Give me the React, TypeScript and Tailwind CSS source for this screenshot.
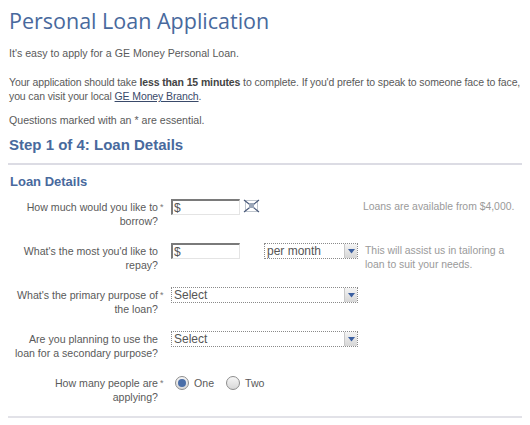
import React from "react";

const Arrow = () => (
  <span className="flex h-[14px] w-[13px] items-center justify-center border-l border-[#c8c8c8] bg-gradient-to-b from-[#f4f4f4] to-[#d6d6d6]">
    <svg width="7" height="5" viewBox="0 0 7 5">
      <path d="M0 0 L7 0 L3.5 4.5 Z" fill="#3b5fa0" />
    </svg>
  </span>
);

const Select = ({ value, w }: { value: string; w: string }) => (
  <div className={`flex h-[16px] items-center justify-between border border-dotted border-[#8a8a8a] bg-white ${w}`}>
    <span className="pl-[2px] text-[12px] leading-[14px] text-[#555]">{value}</span>
    <Arrow />
  </div>
);

const TextInput = () => (
  <div className="flex h-[16px] w-[69px] items-center border-t-2 border-l-2 border-r border-b border-t-[#7a7a7a] border-l-[#7a7a7a] border-r-[#e4e4e4] border-b-[#e4e4e4] bg-white">
    <span className="pl-[1px] text-[12px] leading-[14px] text-[#555]">$</span>
  </div>
);

const BrokenImg = () => (
  <svg width="18" height="14" viewBox="0 0 18 14" className="ml-[3px]">
    <rect x="2.5" y="1.5" width="12" height="11" fill="none" stroke="#7d8b9b" strokeWidth="1" strokeDasharray="1 1" />
    <path d="M1 1 L16 13 M16 1 L1 13" stroke="#49597a" strokeWidth="1.2" />
    <rect x="6" y="4" width="5" height="5" fill="#9aa6b8" />
  </svg>
);

const Radio = ({ on }: { on?: boolean }) => (
  <span className="flex h-[14px] w-[14px] items-center justify-center rounded-full border border-[#8d8d8d] bg-gradient-to-b from-[#f6f6f6] to-[#d8d8d8]">
    {on && <span className="h-[8px] w-[8px] rounded-full bg-[#4a6ea8]" />}
  </span>
);

const Row = ({
  l1,
  l2,
  star,
  children,
}: {
  l1: string;
  l2: string;
  star?: boolean;
  children: React.ReactNode;
}) => (
  <div className="flex items-start">
    <div className="w-[150px] text-right text-[10.6px] leading-[14px] text-[#5a5a5a]">
      <div className="whitespace-nowrap">{l1}</div>
      <div className="whitespace-nowrap">{l2}</div>
    </div>
    <div className="w-[13px] pl-[2px] text-[9px] leading-[14px] text-[#777]">{star ? "*" : ""}</div>
    <div className="flex flex-1 items-start">{children}</div>
  </div>
);

export default function App() {
  return (
    <div
      className="h-[425px] w-[530px] overflow-hidden bg-white px-[9px]"
      style={{ fontFamily: '"Liberation Sans", Arial, sans-serif' }}
    >
      <h1
        className="pt-[7px] text-[21.5px] leading-[28px] text-[#48699d]"
        style={{ fontFamily: '"Open Sans", sans-serif' }}
      >
        Personal Loan Application
      </h1>
      <div className="mt-[11px] text-[10.6px] leading-[14px] text-[#5a5a5a]">
        <p>It's easy to apply for a GE Money Personal Loan.</p>
        <p className="mt-[15px] whitespace-nowrap text-[10.5px] tracking-[-0.12px]">
          Your application should take <b className="text-[#444]">less than 15 minutes</b> to complete. If you'd prefer to speak to someone face to face,
          <br />
          you can visit your local <span className="text-[#3a4a6a] underline">GE Money Branch</span>.
        </p>
        <p className="mt-[10px]">Questions marked with an * are essential.</p>
      </div>
      <h2 className="mt-[9px] text-[15px] font-bold leading-[18px] text-[#48699d]">Step 1 of 4: Loan Details</h2>
      <div className="-mx-[1px] mt-[9px] h-[2px] bg-[#dcdce4]" />
      <h3 className="mt-[9px] pl-[1px] text-[13px] font-bold leading-[16px] text-[#48699d]">Loan Details</h3>
      <div className="-ml-[1px] mt-[10px] flex flex-col gap-[16px]">
        <Row l1="How much would you like to" l2="borrow?" star>
          <div className="-mt-[1px] flex items-start">
            <TextInput />
            <BrokenImg />
          </div>
          <div className="ml-[102px] whitespace-nowrap text-[10.4px] leading-[14px] text-[#9a9a9a]">
            Loans are available from $4,000.
          </div>
        </Row>
        <Row l1="What's the most you'd like to" l2="repay?">
          <div className="-mt-[1px] flex items-start">
            <TextInput />
            <div className="ml-[24px]">
              <Select value="per month" w="w-[94px]" />
            </div>
          </div>
          <div className="ml-[7px] text-[10.4px] leading-[14px] text-[#9a9a9a]">
            <div className="whitespace-nowrap">This will assist us in tailoring a</div>
            <div className="whitespace-nowrap">loan to suit your needs.</div>
          </div>
        </Row>
        <Row l1="What's the primary purpose of" l2="the loan?" star>
          <div className="-mt-[1px]">
            <Select value="Select" w="w-[187px]" />
          </div>
        </Row>
        <Row l1="Are you planning to use the" l2="loan for a secondary purpose?">
          <div className="-mt-[1px]">
            <Select value="Select" w="w-[187px]" />
          </div>
        </Row>
        <Row l1="How many people are" l2="applying?" star>
          <div className="flex items-center pl-[4px] text-[10.6px] leading-[14px] text-[#5a5a5a]">
            <Radio on />
            <span className="ml-[5px]">One</span>
            <span className="ml-[12px]">
              <Radio />
            </span>
            <span className="ml-[5px]">Two</span>
          </div>
        </Row>
      </div>
      <div className="-mx-[1px] mt-[12px] h-[2px] bg-[#e2e2e8]" />
    </div>
  );
}
